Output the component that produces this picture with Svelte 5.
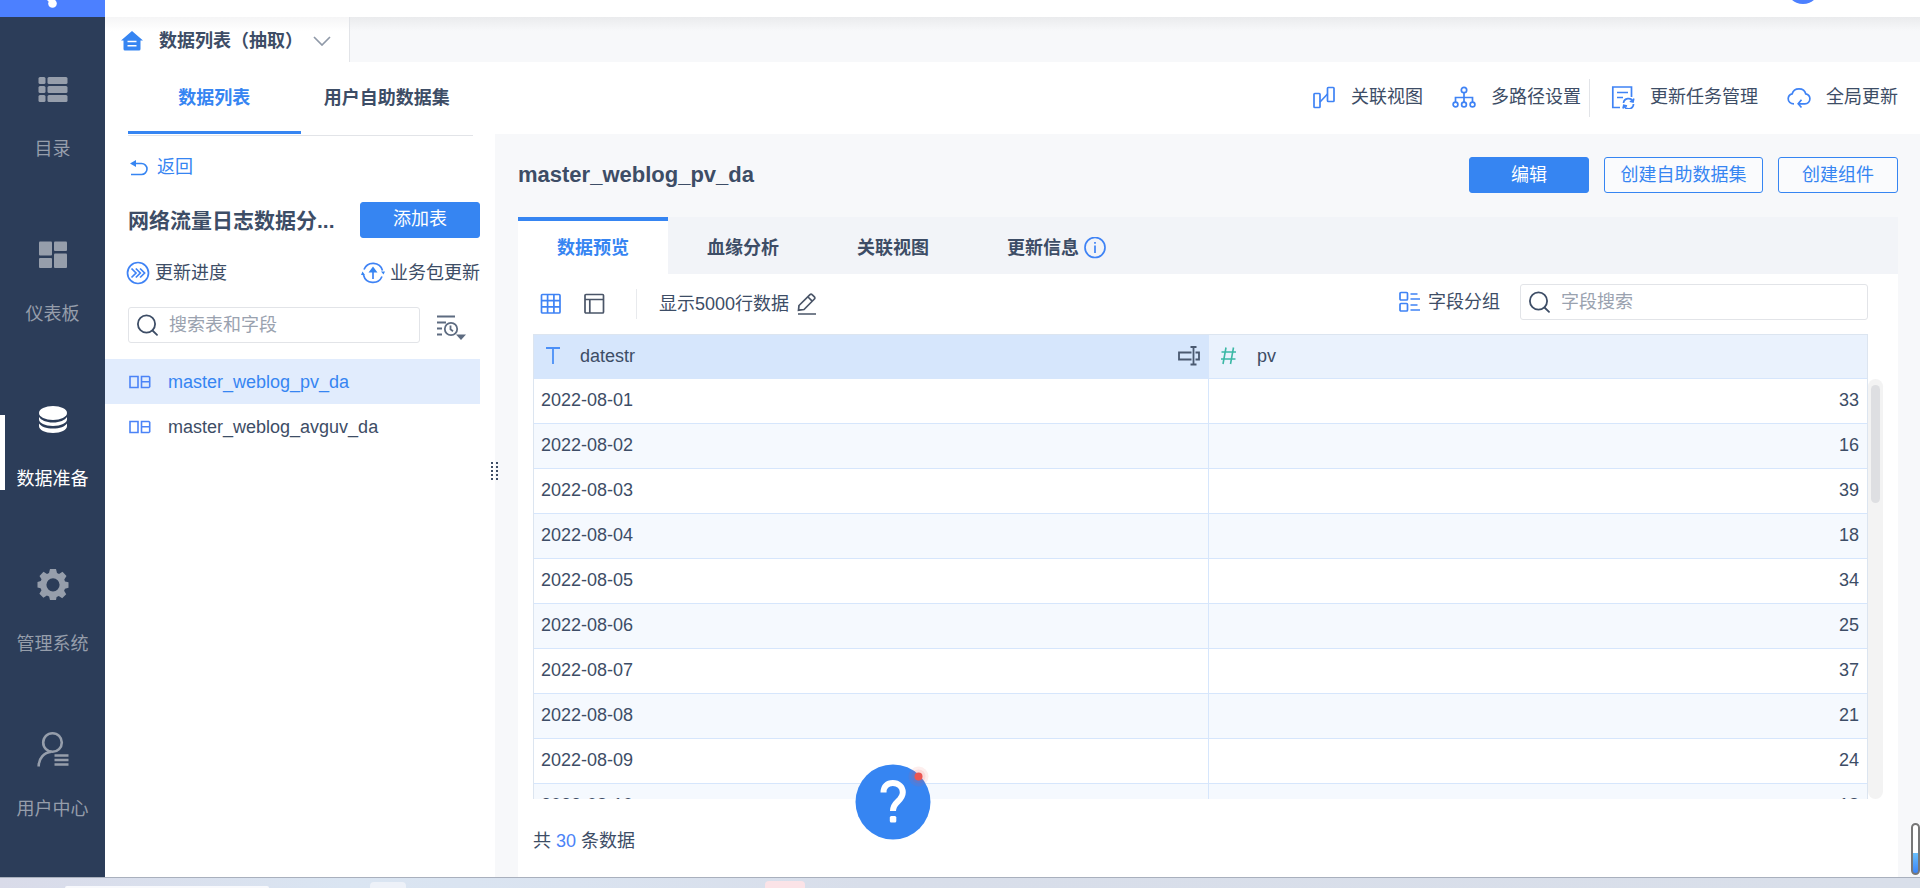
<script>
  const nav = [
    { id: 'catalog', label: '目录' },
    { id: 'dashboard', label: '仪表板' },
    { id: 'data', label: '数据准备', active: true },
    { id: 'manage', label: '管理系统' },
    { id: 'user', label: '用户中心' }
  ];
  const tables = ['master_weblog_pv_da', 'master_weblog_avguv_da'];
  let current = $state('master_weblog_pv_da');
  const rows = [
    ['2022-08-01', 33],
    ['2022-08-02', 16],
    ['2022-08-03', 39],
    ['2022-08-04', 18],
    ['2022-08-05', 34],
    ['2022-08-06', 25],
    ['2022-08-07', 37],
    ['2022-08-08', 21],
    ['2022-08-09', 24],
    ['2022-08-10', 18]
  ];
</script>

{#snippet magnifier()}
  <svg class="magnifier" width="22" height="22" viewBox="0 0 22 22" fill="none" stroke="#3d4d66" stroke-width="1.8" stroke-linecap="round" aria-hidden="true">
    <circle cx="9.500" cy="10" r="8.600" /><path d="M15.500 16.500l4.500 4.300" />
  </svg>
{/snippet}

{#snippet navIcon(id)}
  <svg width="32" height="36" viewBox="0 0 32 36" fill="currentColor" aria-hidden="true">
    {#if id === 'catalog'}
      <rect x="1.500" y="6" width="7" height="7" rx="1.500" /><rect x="10.500" y="6" width="20" height="7" rx="1.500" />
      <rect x="1.500" y="15" width="7" height="7" rx="1.500" /><rect x="10.500" y="15" width="20" height="7" rx="1.500" />
      <rect x="1.500" y="24" width="7" height="7" rx="1.500" /><rect x="10.500" y="24" width="20" height="7" rx="1.500" />
    {:else if id === 'dashboard'}
      <rect x="2" y="5.500" width="13" height="14" rx="1" /><rect x="17" y="5.500" width="13" height="9.500" rx="1" />
      <rect x="2" y="22" width="13" height="10" rx="1" /><rect x="17" y="17.500" width="13" height="14.500" rx="1" />
    {:else if id === 'data'}
      <ellipse cx="16" cy="12" rx="14" ry="7" />
      <path d="M2 16c2 3 7 5.500 14 5.500s12-2.500 14-5.500v2.500c0 3.500-6 6.500-14 6.500S2 22 2 18.500z" />
      <path d="M2 22.500c2 3 7 5 14 5s12-2 14-5v2.500c0 4-6 7-14 7S2 29 2 25z" />
    {:else if id === 'manage'}
      <path fill-rule="evenodd" d="M13 3h6l1 4 2 .9L25.500 5.700l4 4.200-2.200 3.600.7 1.900 3.500.8v5.600l-3.500.9-.9 2 2.100 3.500-4 4-3.400-2.100-2.200.9L19 34h-6l-.9-3.500-2.200-.9-3.500 2.100-4-4 2.100-3.500-.9-2L.5 21.500v-5.600l3.300-.8.7-1.900L2.500 9.900l4-4.200L10 7.900 12 7zM16 12.200a6.600 6.600 0 1 0 0 13.200 6.600 6.600 0 1 0 0-13.200z" />
    {:else}
      <g fill="none" stroke="currentColor" stroke-width="2.600">
        <circle cx="15.500" cy="11.500" r="9.300" /><path d="M1.700 35.500C1.500 27.500 7 21.500 14.500 20.800" />
        <path d="M17.500 24.500h14M17.500 29h14M17.500 33.500h14" stroke-width="2.400" />
      </g>
    {/if}
  </svg>
{/snippet}

<div class="app">
  <header class="top">
    <a class="logo" href="#home" aria-label="首页">
      <svg width="24" height="17" viewBox="0 0 24 17" fill="#fff"><circle cx="11.500" cy="3.500" r="4.300" /><path d="M6 0h7l-3 4z" /></svg>
    </a>
    <div class="avatar"></div>
  </header>

  <div class="main">
    <nav class="side">
      {#each nav as n}
        <a class="nav-item" class:active={n.active} href="#{n.id}">
          {@render navIcon(n.id)}
          <span>{n.label}</span>
        </a>
      {/each}
    </nav>

    <div class="content">
      <div class="tabbar">
        <button class="page-tab">
          <svg width="22" height="20" viewBox="0 0 22 20" aria-hidden="true"><path fill="#3685f2" d="M11 0l11 9.500h-2.500V18a1.500 1.500 0 0 1-1.500 1.500H4A1.500 1.500 0 0 1 2.500 18V9.500H0z" /><path d="M6.500 10.500h9M6.500 14.800h9" stroke="#fff" stroke-width="1.600" /></svg>
          <b>数据列表（抽取）</b>
          <svg width="18" height="10" viewBox="0 0 18 10" fill="none" stroke="#8f99a8" stroke-width="1.700" aria-hidden="true"><path d="M1 1l8 8 8-8" /></svg>
        </button>
      </div>

      <div class="subhead">
        <div class="list-tabs">
          <button class="list-tab on">数据列表</button>
          <button class="list-tab">用户自助数据集</button>
        </div>
        <div class="actions">
          <button class="action">
            <svg class="ico" width="24" height="24" viewBox="0 0 24 24" aria-hidden="true"><rect x="2" y="8.500" width="6" height="14" rx=".8" /><rect x="15.500" y="2.500" width="6.500" height="14" rx=".8" /><path d="M8 17l7.500-8" /></svg>
            关联视图</button>
          <button class="action">
            <svg class="ico" width="24" height="24" viewBox="0 0 24 24" aria-hidden="true"><circle cx="12" cy="5" r="2.700" /><path d="M12 8v9M3.500 17v-4.500h17V17" /><circle cx="3.500" cy="19.500" r="2.400" /><circle cx="12" cy="19.500" r="2.400" /><circle cx="20.500" cy="19.500" r="2.400" /></svg>
            多路径设置</button>
          <span class="divider"></span>
          <button class="action">
            <svg class="ico" width="24" height="24" viewBox="0 0 24 24" aria-hidden="true"><path d="M9 22.500H1.800V2H20.500v10M6 7.500h11M6 12.500h6M12.500 18a5 5 0 0 1 9.500-1.500M22.500 19a5 5 0 0 1-9.500 2M22.800 13.500L22 17l-3.200-.8M12 23.500l.8-3.300 3.200.9" /></svg>
            更新任务管理</button>
          <button class="action last">
            <svg class="ico" width="24" height="24" viewBox="0 0 24 24" aria-hidden="true"><path d="M7 18.800C3.500 18.800 1.200 16.500 1.200 13.800c0-2.500 1.800-4.500 4-5C6 5.500 8.800 3.800 12 3.800s6 1.700 6.700 5c2.400.5 4.200 2.500 4.200 5 0 2.800-2.200 5-5 5h-6.200M14.500 14.800l-3.300 4 3.300 3.700" /></svg>
            全局更新</button>
        </div>
      </div>

      <div class="columns">
        <aside class="left">
          <a class="back" href="#back">
            <svg width="19" height="17" viewBox="0 0 19 17" fill="none" stroke="#3685f2" stroke-width="1.600" aria-hidden="true"><path d="M5 4.500h7.500a5.500 5.500 0 0 1 0 11H2" /><path d="M1 4.500L7 1v7z" fill="#3685f2" stroke="none" /></svg>
            返回</a>
          <div class="pack">
            <h2>网络流量日志数据分...</h2>
            <button class="btn solid add">添加表</button>
          </div>
          <div class="links">
            <button class="link">
              <svg class="ico" width="24" height="24" viewBox="0 0 24 24" aria-hidden="true"><circle cx="12" cy="12" r="10.500" /><path d="M5.500 7.500L10 12l-4.500 4.500M9.800 7.500l4.500 4.500-4.500 4.500M14.100 7.500l4.500 4.500-4.500 4.500" /></svg>
              更新进度</button>
            <button class="link">
              <svg class="ico" width="24" height="24" viewBox="0 0 24 24" aria-hidden="true"><path d="M3 8.500A9.800 9.800 0 0 1 21.500 9.500M21 15.500A9.800 9.800 0 0 1 2.500 14M12 8v10" /><path d="M12 5.500l4.500 6h-9zM20 10.500h4l-1.500 3zM0 14h4l-2.500-3.500z" fill="#3685f2" stroke="none" /></svg>
              业务包更新</button>
          </div>
          <div class="find">
            <label class="box">{@render magnifier()}<input placeholder="搜索表和字段" aria-label="搜索表和字段" /></label>
            <button class="sort" aria-label="排序">
              <svg width="30" height="26" viewBox="0 0 30 26" fill="none" stroke="#5d6b80" stroke-width="1.800" aria-hidden="true"><path d="M1 1.500h18M1 7.500h9M1 13.500h5M1 19.500h5" /><circle cx="15" cy="14" r="6.200" /><path d="M14.500 10.500v3.700l2.500 2" /><path d="M20 19.500h10l-5 5.500z" fill="#5d6b80" stroke="none" /></svg>
            </button>
          </div>
          <ul class="tables">
            {#each tables as t}
              <li>
                <button class:on={t === current} onclick={() => (current = t)}>
                  <svg width="22" height="14" viewBox="0 0 22 14" fill="none" stroke="#4b83f7" stroke-width="1.600" aria-hidden="true"><path d="M1 1.500h8v11H1zM12.500 1.500h7.300l.9.800v9.400l-.9.800h-7.300zM12.500 6.800h8" /></svg>
                  {t}
                </button>
              </li>
            {/each}
          </ul>
          <span class="grip"></span>
        </aside>

        <main class="right">
          <div class="title-row">
            <h1>master_weblog_pv_da</h1>
            <button class="btn solid">编辑</button>
            <button class="btn wide">创建自助数据集</button>
            <button class="btn">创建组件</button>
          </div>
          <section class="card">
            <div class="card-tabs">
              <button class="on">数据预览</button>
              <button>血缘分析</button>
              <button>关联视图</button>
              <button class="info">更新信息
                <svg class="ico" width="22" height="22" viewBox="0 0 22 22" aria-hidden="true"><circle cx="11" cy="10.500" r="10" /><path d="M11 8.500V16M11 5v1.800" /></svg>
              </button>
            </div>
            <div class="tools">
              <button class="tool" aria-label="表格">
                <svg class="ico" width="22" height="22" viewBox="0 0 22 22" aria-hidden="true"><rect x="1.500" y="1.500" width="18.500" height="18.500" rx="1" /><path d="M7.600 1.500V20M13.900 1.500V20M1.500 7.600H20M1.500 13.900H20" /></svg>
              </button>
              <button class="tool" aria-label="视图">
                <svg class="ico dark" width="22" height="22" viewBox="0 0 22 22" aria-hidden="true"><rect x="1" y="1.500" width="18.500" height="18.500" rx="1" /><path d="M1 6.500h18.500M5.800 6.500V20" /></svg>
              </button>
              <span class="rule"></span>
              <button class="tool limit">显示5000行数据
                <svg class="ico dark" width="20" height="22" viewBox="0 0 20 22" aria-hidden="true"><path d="M1 21h18M2 12.500L13 1.700c.6-.6 1.500-.6 2.100 0l2.300 2.200c.6.6.6 1.500 0 2.100L7 16.500l-5.500.7zM11 4l4.200 4.200" /></svg>
              </button>
              <button class="tool group">
                <svg class="ico" width="22" height="22" viewBox="0 0 22 22" aria-hidden="true"><rect x="1" y="1.500" width="7.500" height="7.500" rx="1" /><rect x="1" y="12.500" width="7.500" height="7.500" rx="1" /><path d="M11.500 3h7M11.500 8h9.500M11.500 14h7M11.500 19h9.500" /></svg>
                字段分组</button>
              <label class="box field">{@render magnifier()}<input placeholder="字段搜索" aria-label="字段搜索" /></label>
            </div>
            <div class="grid-wrap">
              <div class="scroller">
                <table>
                  <thead>
                    <tr>
                      <th class="date">
                        <div>
                          <svg width="14" height="17" viewBox="0 0 14 17" fill="none" stroke="#4b8ff7" stroke-width="1.800" aria-hidden="true"><path d="M0 1h14M7 1v16" /></svg>
                          datestr
                          <svg class="rename" width="22" height="20" viewBox="0 0 22 20" fill="none" stroke="#4a5970" stroke-width="1.800" aria-hidden="true"><path d="M13.500 6.500H1v7h12.500M17.500 6.500h3.500v7h-3.500M15.500 1v17.500M12.500 1h6M12.500 18.500h6" /></svg>
                        </div>
                      </th>
                      <th>
                        <div>
                          <svg width="16" height="18" viewBox="0 0 16 18" fill="none" stroke="#3bb8a5" stroke-width="1.600" aria-hidden="true"><path d="M5 .5l-3 16.500M12.500.5l-3 16.500M.5 5H15M0 12h14.500" /></svg>
                          pv
                        </div>
                      </th>
                    </tr>
                  </thead>
                  <tbody>
                    {#each rows as [d, v]}
                      <tr><td>{d}</td><td class="num">{v}</td></tr>
                    {/each}
                  </tbody>
                </table>
              </div>
              <div class="track"><div class="thumb"></div></div>
            </div>
            <div class="total">共 <em>30</em> 条数据</div>
          </section>
        </main>
      </div>
    </div>
  </div>

  <footer class="dock"><i class="search-pill"></i><i class="chip"></i><i class="chip rose"></i></footer>

  <button class="help" aria-label="帮助">
    <svg width="88" height="76" viewBox="0 0 88 76" aria-hidden="true"><circle cx="38" cy="38" r="37.500" fill="#3685f2" /><path d="M28.500 28.500c0-6.500 4-9.500 9.300-9.500 5.700 0 10 3.800 10 9.300 0 4-1.800 6.200-5 9.200-3.500 3.200-4.800 5-4.800 9.500" fill="none" stroke="#fff" stroke-width="6" /><rect x="34.800" y="52" width="6.500" height="6.500" rx="1.500" fill="#fff" /><circle cx="63.500" cy="12.500" r="10" fill="#ea5552" opacity=".1" /><circle cx="63.500" cy="12.500" r="7" fill="#ea5552" opacity=".12" /><circle cx="63.500" cy="12.500" r="4" fill="#ea5552" /></svg>
  </button>
  <div class="gauge"></div>
</div>

<style>
  :global(body) { margin: 0; }
  .app { position: relative; display: flex; flex-direction: column; height: 100vh; overflow: hidden; background: #fff; color: #3d4d66; font: 18px/24px "Liberation Sans", "Noto Sans CJK SC", sans-serif; }
  .app * { box-sizing: border-box; }
  button { margin: 0; padding: 0; border: 0; background: none; color: inherit; font: inherit; cursor: pointer; }
  a { color: inherit; text-decoration: none; }
  svg { flex: none; display: block; }
  .ico { fill: none; stroke: #3f83f5; stroke-width: 1.7; }
  .ico.dark { stroke: #4a5568; }

  .top { flex: none; display: flex; justify-content: space-between; height: 17px; overflow: hidden; }
  .logo { display: flex; justify-content: center; width: 105px; background: #4c80ff; }
  .avatar { width: 34px; height: 34px; margin: -30px 100px 0 0; border-radius: 50%; background: #4c80ff; }

  .main { flex: 1; min-height: 0; display: flex; }
  .side { flex: none; width: 105px; padding-top: 23px; background: #2c3d59; }
  .nav-item { position: relative; display: flex; flex-direction: column; align-items: center; gap: 30px; height: 165px; padding-top: 31px; color: #969eab; }
  .nav-item.active { color: #fff; }
  .nav-item.active::before { content: ""; position: absolute; left: 0; top: 45px; width: 5px; height: 75px; background: #fff; }

  .content { flex: 1; min-width: 0; display: flex; flex-direction: column; }
  .tabbar { flex: none; height: 45px; background: linear-gradient(#eaebed, #f7f8fa 14px); }
  .page-tab { display: flex; align-items: center; gap: 10px; width: 245px; height: 45px; padding: 2px 18px 0 16px; border-right: 1px solid #e2e4e8; background: linear-gradient(#f5f5f6, #fff 14px); white-space: nowrap; }
  .page-tab b { flex: 1; padding-left: 6px; text-align: left; }

  .subhead { flex: none; display: flex; justify-content: space-between; height: 72px; padding: 0 22px 0 23px; }
  .list-tabs { display: flex; width: 345px; }
  .list-tab { flex: 1; height: 72px; padding-top: 2px; font-weight: 700; border-bottom: 3px solid transparent; }
  .list-tab.on { color: #3685f2; border-color: #3685f2; }
  .actions { display: flex; align-items: center; white-space: nowrap; }
  .action { display: flex; align-items: center; gap: 15px; padding-bottom: 2px; }
  .action + .action { margin-left: 29px; }
  .divider { width: 1px; height: 38px; margin: 0 21px 0 8px; background: #e2e4e8; }

  .columns { flex: 1; min-height: 0; display: flex; background: #f7f8fa; }
  .left { position: relative; flex: none; width: 390px; padding: 0 15px 0 0; background: #fff; }
  .left::before { content: ""; display: block; height: 1px; margin: 1px 7px 0 23px; background: #e2e4e8; }
  .back { display: flex; align-items: center; gap: 9px; width: max-content; margin: 19px 0 0 24px; color: #3685f2; }
  .pack { display: flex; align-items: center; justify-content: space-between; margin: 23px 0 0 23px; }
  h2 { margin: 0; padding-top: 2px; font-size: 21px; line-height: 34px; white-space: nowrap; }
  .btn { flex: none; width: 120px; height: 36px; border: 1px solid #3685f2; border-radius: 3px; color: #3685f2; background: #fff; line-height: 24px; white-space: nowrap; }
  .btn.solid { background: #3685f2; color: #fff; }
  .btn.add { padding-bottom: 2px; }
  .btn.wide { width: 159px; }
  .links { display: flex; justify-content: space-between; margin: 23px 0 0 21px; }
  .link { display: flex; align-items: center; gap: 5px; }
  .find { display: flex; align-items: center; margin: 22px 0 16px 23px; }
  .box { display: flex; align-items: center; gap: 10px; flex: none; width: 292px; height: 36px; padding: 0 8px; border: 1px solid #e2e4e8; border-radius: 3px; background: #fff; }
  .box input { flex: 1; min-width: 0; height: 32px; padding: 0; border: 0; outline: 0; background: none; color: inherit; font: inherit; }
  .box input::placeholder { color: #9aa2af; opacity: 1; }
  .sort { margin: 5px 0 0 16px; }
  .tables { margin: 0; padding: 0; list-style: none; }
  .tables button { display: flex; align-items: center; gap: 17px; width: 100%; height: 45px; padding: 0 0 0 24px; }
  .tables .on { background: #e1ecfd; color: #3685f2; }
  .grip { position: absolute; right: -3px; top: 328px; width: 7px; height: 18px; background: repeating-linear-gradient(#3d4d66 0 2px, transparent 2px 4px); -webkit-mask: linear-gradient(90deg, #000 2px, transparent 2px 5px, #000 5px); mask: linear-gradient(90deg, #000 2px, transparent 2px 5px, #000 5px); }

  .right { flex: 1; min-width: 0; display: flex; flex-direction: column; padding: 23px 22px 0 23px; }
  .title-row { flex: none; display: flex; align-items: center; gap: 15px; margin-bottom: 24px; }
  h1 { flex: 1; margin: 0; font-size: 22px; line-height: 28px; }
  .title-row .btn:not(.solid) { background: #fafbfd; }
  .card { flex: 1; min-height: 0; display: flex; flex-direction: column; background: #fff; }
  .card-tabs { flex: none; display: flex; height: 57px; background: #f2f4f8; }
  .card-tabs button { width: 150px; padding-top: 4px; font-weight: 700; white-space: nowrap; }
  .card-tabs .on { padding-top: 0; border-top: 4px solid #3685f2; background: #fff; color: #3685f2; }
  .card-tabs .info { display: flex; align-items: center; gap: 5px; padding-left: 39px; }
  .tools { flex: none; display: flex; align-items: center; gap: 22px; height: 60px; padding: 0 30px 0 22px; }
  .tool { display: flex; align-items: center; gap: 8px; white-space: nowrap; }
  .rule { width: 1px; height: 30px; margin-left: 8px; background: #e8eaed; }
  .group { margin-left: auto; gap: 7px; padding-bottom: 4px; }
  .field { width: 348px; margin: 0 0 4px -2px; }

  .grid-wrap { flex: 1; min-height: 0; display: flex; padding: 0 15px; }
  .scroller { flex: 1; min-width: 0; overflow: hidden; border: 1px solid #dce5f0; border-bottom: 0; }
  table { width: 100%; border-collapse: separate; border-spacing: 0; table-layout: fixed; }
  th { height: 44px; padding: 0 0 2px; border-bottom: 1px solid #d6e6fc; background: #eaf2fd; background-clip: padding-box; font-weight: 400; text-align: left; }
  th.date { width: 675px; background-color: #d6e6fc; border-right: 1px solid #d6e6fc; }
  th div { display: flex; align-items: center; gap: 20px; padding: 0 8px 0 12px; }
  .rename { margin-left: auto; }
  td { height: 45px; padding: 0 8px 2px 7px; border-bottom: 1px solid #d6e6fc; }
  td:first-child { border-right: 1px solid #d6e6fc; }
  tbody tr:nth-child(even) { background: #f5f9fe; }
  .num { text-align: right; }
  .track { flex: none; width: 15px; margin-top: 45px; padding: 6px 3px; border-radius: 8px; background: #f3f3f3; }
  .thumb { width: 9px; height: 118px; border-radius: 5px; background: #dedfe2; }
  .total { flex: none; height: 78px; padding: 30px 15px 0; }
  em { font-style: normal; color: #4b83f7; }

  .dock { flex: none; display: flex; align-items: flex-end; height: 11px; border-top: 1px solid #a9b0bd; background: linear-gradient(90deg, #d9dbe9, #dae5f2 18%, #dae3f0 30%, #d8deea 45%, #d9dfea); }
  .search-pill { width: 204px; height: 2px; margin-left: 65px; border-radius: 6px 6px 0 0; background: #f8f9fc; }
  .chip { width: 36px; height: 6px; margin-left: 101px; border-radius: 4px 4px 0 0; background: #edf1f8; }
  .chip.rose { width: 40px; height: 7px; margin-left: 359px; background: #fbe3e7; }
  .help { position: absolute; left: 855px; bottom: 48px; width: 88px; height: 76px; }
  .gauge { position: absolute; right: 0; bottom: 13px; width: 9px; height: 52px; border: 2px solid #777; border-radius: 5px; background: linear-gradient(#fff 28px, #6bc0fb 28px, #3a84f7); }
</style>
